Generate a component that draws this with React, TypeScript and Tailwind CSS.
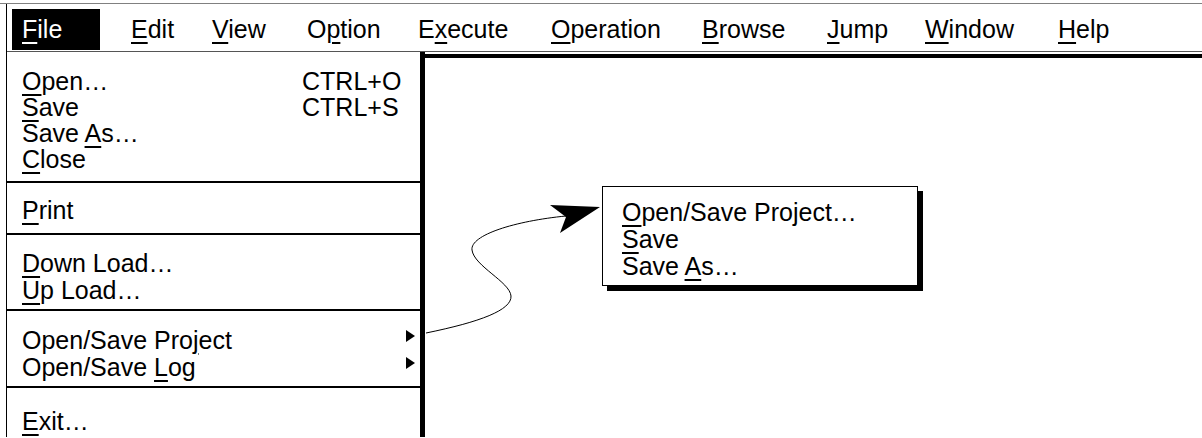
import React from "react";

// one letter of a label gets the mnemonic underline
const Key = ({ t, u }: { t: string; u: number }) => (
  <>
    {t.slice(0, u)}
    <span className="underline decoration-2 underline-offset-[4px]">{t[u]}</span>
    {t.slice(u + 1)}
  </>
);

const menus: [string, number, string][] = [
  ["Edit", 0, "w-[81px]"],
  ["View", 0, "w-[95px]"],
  ["Option", 1, "w-[111px]"],
  ["Execute", 1, "w-[133px]"],
  ["Operation", 0, "w-[151px]"],
  ["Browse", 0, "w-[125px]"],
  ["Jump", 0, "w-[98px]"],
  ["Window", 0, "w-[133px]"],
  ["Help", 0, ""],
];

const Caret = () => (
  <svg width="9" height="12" viewBox="0 0 9 12" className="mt-[3px] shrink-0">
    <polygon points="0,0 9,6 0,12" fill="#000" />
  </svg>
);

const App: React.FC = () => {
  return (
    <div className="relative w-[1202px] h-[438px] overflow-hidden bg-white pt-[3px] text-black text-[25px] font-['Liberation_Sans',Arial,sans-serif]">
      <div className="border-t border-[#808080]">
        <div className="ml-[6px] border-l border-black">
          {/* menu bar */}
          <div className="flex items-start h-[48px] pt-[5px] pl-[5px] border-b border-[#555] leading-[41px]">
            <div className="w-[88px] h-[41px] bg-black text-white pl-[10px]">
              <Key t="File" u={0} />
            </div>
            <div className="ml-[31px] flex">
              {menus.map(([t, u, w]) => (
                <div key={t} className={w}>
                  <Key t={t} u={u} />
                </div>
              ))}
            </div>
          </div>

          {/* body */}
          <div className="flex h-[385px]">
            <div className="w-[418px] shrink-0 border-r-[5px] border-black">
              <div className="pl-[15px] pt-[16px] pb-[9px] leading-[26px]">
                <div className="flex">
                  <span className="w-[280px]"><Key t="Open…" u={0} /></span>
                  <span>CTRL+O</span>
                </div>
                <div className="flex">
                  <span className="w-[280px]"><Key t="Save" u={0} /></span>
                  <span>CTRL+S</span>
                </div>
                <div><Key t="Save As…" u={5} /></div>
                <div><Key t="Close" u={0} /></div>
              </div>
              <div className="border-t-2 border-black pl-[15px] pt-[14px] pb-[10px] leading-[26px]">
                <Key t="Print" u={0} />
              </div>
              <div className="border-t-2 border-black pl-[15px] pt-[15px] pb-[5px] leading-[27px]">
                <div><Key t="Down Load…" u={0} /></div>
                <div><Key t="Up Load…" u={0} /></div>
              </div>
              <div className="border-t-2 border-black pl-[15px] pr-[5px] pt-[16px] pb-[5px] leading-[27px]">
                <div className="flex justify-between items-start">
                  <span><Key t="Open/Save Project" u={13} /></span>
                  <Caret />
                </div>
                <div className="flex justify-between items-start">
                  <span><Key t="Open/Save Log" u={10} /></span>
                  <Caret />
                </div>
              </div>
              <div className="border-t-2 border-black pl-[15px] pt-[20px] leading-[26px]">
                <Key t="Exit…" u={0} />
              </div>
            </div>
            <div className="flex-1 mt-[2px] border-t-4 border-black" />
          </div>
        </div>
      </div>

      {/* curved pointer to the cascade */}
      <svg className="absolute left-0 top-0 pointer-events-none" width="1202" height="438">
        <path
          d="M426 333 C480 322 512 310 511 296 C510 282 474 266 472 250 C470 235 515 221 566 216"
          fill="none"
          stroke="#000"
          strokeWidth="1"
        />
        <polygon points="550,205 600,207 560,233 566,217" fill="#000" />
      </svg>

      {/* cascade submenu */}
      <div className="absolute left-[602px] top-[186px] w-[316px] h-[100px] border border-black bg-white shadow-[5px_5px_0_0_#000] pl-[19px] pt-[12px] leading-[27px]">
        <div><Key t="Open/Save Project…" u={0} /></div>
        <div><Key t="Save" u={0} /></div>
        <div><Key t="Save As…" u={5} /></div>
      </div>
    </div>
  );
};

export default App;
